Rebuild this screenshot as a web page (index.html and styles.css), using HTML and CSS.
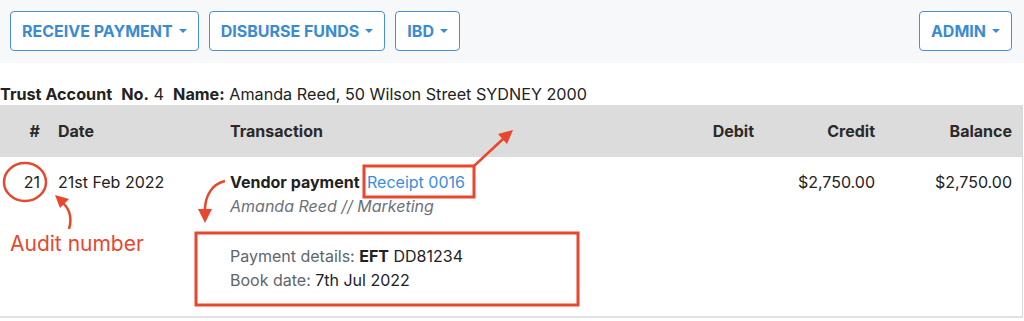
FILE: index.html
```html
<!DOCTYPE html>
<html lang="en">
<head>
    <meta charset="UTF-8">
    <meta name="viewport" content="width=device-width, initial-scale=1.0">
    <title>Trust Ledger</title>
    <link rel="stylesheet" href="styles.css">
</head>
<body>
    <div class="toolbar">
        <button class="menu-btn">Receive Payment <span class="caret"></span></button>
        <button class="menu-btn">Disburse Funds <span class="caret"></span></button>
        <button class="menu-btn">IBD <span class="caret"></span></button>
        <button class="menu-btn push-right">Admin <span class="caret"></span></button>
    </div>

    <p class="account-line">
        <b>Trust Account</b>&nbsp; <b>No.</b> 4&nbsp; <b>Name:</b> Amanda Reed, 50 Wilson Street SYDNEY 2000
    </p>

    <div class="ledger">
        <div class="ledger-row ledger-head">
            <div class="cell num">#</div>
            <div class="cell date">Date</div>
            <div class="cell trans">Transaction</div>
            <div class="cell money">Debit</div>
            <div class="cell money">Credit</div>
            <div class="cell money">Balance</div>
        </div>
        <div class="ledger-row ledger-body">
            <div class="cell num">21</div>
            <div class="cell date">21st Feb 2022</div>
            <div class="cell trans">
                <div><b>Vendor payment</b> <a href="#" class="receipt">Receipt 0016</a></div>
                <div class="note">Amanda Reed // Marketing</div>
                <div class="details">
                    <div><span class="label">Payment details:</span> <b>EFT</b> DD81234</div>
                    <div><span class="label">Book date:</span> 7th Jul 2022</div>
                </div>
            </div>
            <div class="cell money"></div>
            <div class="cell money">$2,750.00</div>
            <div class="cell money">$2,750.00</div>
        </div>
    </div>

    <!-- annotations drawn over the page -->
    <div class="callout">Audit number</div>
    <svg class="marks" width="1024" height="321" viewBox="0 0 1024 321">
        <g fill="none" stroke="#e8472d" stroke-width="2.5">
            <ellipse cx="25" cy="182" rx="21" ry="19"/>
            <path d="M69 229 C73 216 68 206 61 202"/>
            <path d="M225 181 C212 184 205 196 205 210"/>
            <path d="M474 166 L503 139"/>
        </g>
        <g fill="none" stroke="#e8472d" stroke-width="3">
            <rect x="364" y="166" width="110" height="31"/>
            <rect x="196" y="233" width="382" height="72"/>
        </g>
        <g fill="#e8472d">
            <polygon points="55,195 69,199 60,208"/>
            <polygon points="198,209 212,209 205,223"/>
            <polygon points="513,130 498,134 507,144"/>
        </g>
    </svg>
</body>
</html>
```

FILE: styles.css
```css
body {
    margin: 0;
    font-family: Inter, "Liberation Sans", Arial, sans-serif;
    font-size: 16px;
    color: #222;
    background: #fff;
    position: relative;
    height: 321px;
    overflow: hidden;
}
.toolbar {
    display: flex;
    gap: 8px;
    padding: 11px 12px 12px 10px;
    background: #f7f8fa;
}
.menu-btn {
    height: 40px;
    padding: 0 11px;
    font-family: inherit;
    font-size: 16px;
    font-weight: bold;
    text-transform: uppercase;
    color: #3b8bd3;
    background: #fff;
    border: 1px solid #4a8fd5;
    border-radius: 4px;
    display: flex;
    align-items: center;
    gap: 2px;
}
.menu-btn + .menu-btn {
    margin-left: 2px;
}
.push-right {
    margin-left: auto !important;
}
.caret {
    display: inline-block;
    width: 0;
    height: 0;
    margin-left: 4px;
    border-left: 4px solid transparent;
    border-right: 4px solid transparent;
    border-top: 4px solid #3b8bd3;
}
.account-line {
    margin: 0;
    padding: 22px 0 1px;
    line-height: 19px;
    font-size: 16.2px;
}
.ledger {
    width: 1023px;
    border-right: 1px solid #d6d8dc;
    border-bottom: 2px solid #dfe2e6;
    height: 213px;
    box-sizing: border-box;
}
.ledger-row {
    display: grid;
    grid-template-columns: 50px 170px 1fr 120px 121px 137px;
}
.ledger-head {
    background: #dcdcdc;
    height: 52px;
    align-items: center;
    font-weight: bold;
    color: #2a2a2a;
}
.ledger-body {
    padding-top: 13px;
    line-height: 24px;
}
.cell {
    padding: 0 10px;
}
.num {
    text-align: right;
}
.date {
    padding-left: 8px;
}
.money {
    text-align: right;
}
.receipt {
    color: #3a8ddf;
    text-decoration: none;
    margin-left: 3px;
}
.note {
    font-style: italic;
    color: #6c7178;
}
.details {
    margin-top: 26px;
}
.label {
    color: #60656c;
}
.callout {
    position: absolute;
    left: 10px;
    top: 231px;
    font-size: 21px;
    color: #e8472d;
}
.marks {
    position: absolute;
    left: 0;
    top: 0;
    pointer-events: none;
}
```
